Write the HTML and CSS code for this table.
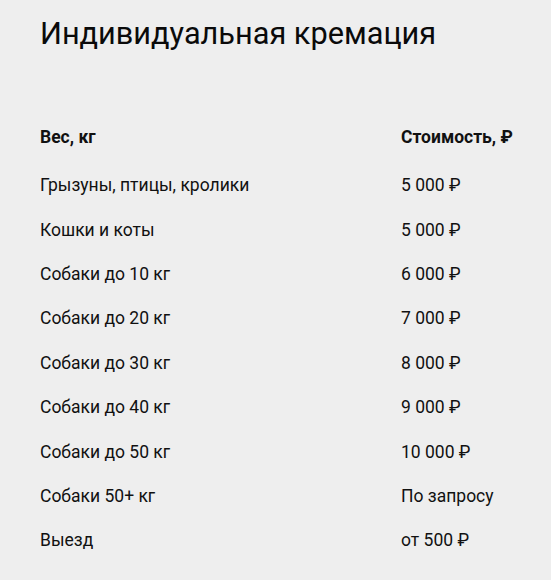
FILE: index.html
```html
<!DOCTYPE html>
<html lang="ru">
<head>
<meta charset="utf-8">
<link rel="stylesheet" href="styles.css">
</head>
<body>
<div class="page">
  <h1 class="title">Индивидуальная кремация</h1>
  <table class="prices">
    <thead>
      <tr><th>Вес, кг</th><th>Стоимость, ₽</th></tr>
    </thead>
    <tbody>
      <tr><td>Грызуны, птицы, кролики</td><td>5 000 ₽</td></tr>
      <tr><td>Кошки и коты</td><td>5 000 ₽</td></tr>
      <tr><td>Собаки до 10 кг</td><td>6 000 ₽</td></tr>
      <tr><td>Собаки до 20 кг</td><td>7 000 ₽</td></tr>
      <tr><td>Собаки до 30 кг</td><td>8 000 ₽</td></tr>
      <tr><td>Собаки до 40 кг</td><td>9 000 ₽</td></tr>
      <tr><td>Собаки до 50 кг</td><td>10 000 ₽</td></tr>
      <tr><td>Собаки 50+ кг</td><td>По запросу</td></tr>
      <tr><td>Выезд</td><td>от 500 ₽</td></tr>
    </tbody>
  </table>
</div>
</body>
</html>
```
FILE: styles.css
```css
html, body {
  margin: 0;
  padding: 0;
  background: #eeeeee;
}
body {
  font-family: Roboto, "Noto Sans", sans-serif;
  color: #111111;
}
.page {
  padding: 14px 0 0 40px;
}
.title {
  margin: 0;
  font-size: 30.7px;
  font-weight: 400;
  line-height: 40px;
  color: #0a0a0a;
}
.prices {
  border-collapse: collapse;
  margin-top: 71px;
  width: 480px;
}
.prices th,
.prices td {
  padding: 0;
  text-align: left;
  font-size: 17.5px;
}
.prices th {
  font-weight: 700;
  height: 24px;
  padding-bottom: 14px;
}
.prices td {
  height: 44.4px;
}
.prices th:first-child,
.prices td:first-child {
  width: 361px;
}
```
